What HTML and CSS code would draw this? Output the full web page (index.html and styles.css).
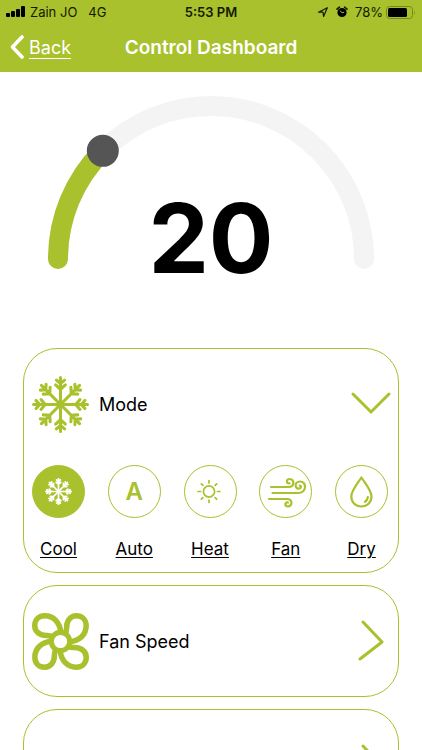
FILE: index.html
```html
<!DOCTYPE html>
<html lang="en">
<head>
    <meta charset="UTF-8">
    <meta name="viewport" content="width=device-width, initial-scale=1.0">
    <title>Control Dashboard</title>
    <link rel="stylesheet" href="styles.css">
    <script>
        // the dial covers 180 degrees between the slider's min and max
        function updateDial() {
            let slider = document.getElementById('temperature');
            let part = (slider.value - slider.min) / (slider.max - slider.min);
            document.getElementById('dialValue').setAttribute('stroke-dasharray', `${part * 100} 200`);
            document.getElementById('dialKnob').setAttribute('transform', `rotate(${part * 180} 163 164)`);
            document.getElementById('reading').innerText = slider.value;
        }

        function toggleModes() {
            document.getElementById('modes').classList.toggle('closed');
        }

        window.onload = updateDial;
    </script>
</head>
<body>
    <header class="header">
        <div class="status">
            <div class="status-side">
                <svg class="signal" viewBox="0 0 19 12" aria-hidden="true">
                    <rect x="0" y="7" width="4" height="4" rx="1"/>
                    <rect x="5" y="5" width="4" height="6" rx="1"/>
                    <rect x="10" y="3" width="4" height="8" rx="1"/>
                    <rect x="15" y="0" width="4" height="11" rx="1"/>
                </svg>
                <span>Zain JO</span>
                <span class="network">4G</span>
            </div>
            <div class="time">5:53 PM</div>
            <div class="status-side status-right">
                <svg class="small-icon" viewBox="0 0 12 12" aria-hidden="true">
                    <path d="M1.5 6.2 L10.3 1.7 L6.6 10.5 L6 6.2 Z" fill="none" stroke="#141a00" stroke-width="1.2" stroke-linejoin="round"/>
                </svg>
                <svg class="small-icon" viewBox="0 0 12 12" aria-hidden="true">
                    <circle cx="6" cy="6.5" r="4.6"/>
                    <path d="M1 3.2 L3.4 1.2 M11 3.2 L8.6 1.2" stroke="#141a00" stroke-width="1.6" stroke-linecap="round"/>
                    <path d="M4 4.6 L6 6.8 L8.2 6.2" fill="none" stroke="#a8c12c" stroke-width="1"/>
                </svg>
                <span>78%</span>
                <svg class="battery" viewBox="0 0 30 13" aria-hidden="true">
                    <rect x="0.5" y="0.5" width="26" height="12" rx="3" fill="none" stroke="#768a1c"/>
                    <rect x="2" y="2" width="19" height="9" rx="1.5"/>
                    <path d="M28 4.5 Q29.5 6.5 28 8.5 Z" fill="#768a1c"/>
                </svg>
            </div>
        </div>
        <nav class="nav">
            <a class="back" href="#">
                <svg class="back-icon" viewBox="0 0 14 24" aria-hidden="true">
                    <path d="M12 2 L2.5 12 L12 22" fill="none" stroke="#fff" stroke-width="3.6" stroke-linecap="round" stroke-linejoin="round"/>
                </svg>
                <span class="back-text">Back</span>
            </a>
            <h1 class="title">Control Dashboard</h1>
        </nav>
    </header>

    <main class="content">
        <div class="dial">
            <svg class="dial-arc" viewBox="0 0 326 174" aria-hidden="true">
                <path d="M10 164 A153 153 0 0 1 316 164" fill="none" stroke="#f4f4f4" stroke-width="20" stroke-linecap="round"/>
                <path id="dialValue" d="M10 164 A153 153 0 0 1 316 164" pathLength="100" stroke-dasharray="25 200" fill="none" stroke="#a8c12c" stroke-width="20" stroke-linecap="round"/>
                <circle id="dialKnob" cx="10" cy="164" r="16" fill="#555"/>
            </svg>
            <output id="reading" class="reading" for="temperature">20</output>
            <input type="range" id="temperature" class="dial-input" min="16" max="32" value="20" aria-label="Temperature" oninput="updateDial()">
        </div>

        <section class="card">
            <button class="card-head" onclick="toggleModes()">
                <svg class="card-icon" viewBox="0 0 56 56" aria-hidden="true">
                    <defs>
                        <path id="arm" d="M28 28 V1.5 M28 7.5 L24 4 M28 7.5 L32 4 M28 13 L23.2 8.8 M28 13 L32.8 8.8"/>
                        <g id="flake" fill="none" stroke="currentColor" stroke-linecap="round">
                            <use href="#arm"/>
                            <use href="#arm" transform="rotate(45 28 28)"/>
                            <use href="#arm" transform="rotate(90 28 28)"/>
                            <use href="#arm" transform="rotate(135 28 28)"/>
                            <use href="#arm" transform="rotate(180 28 28)"/>
                            <use href="#arm" transform="rotate(225 28 28)"/>
                            <use href="#arm" transform="rotate(270 28 28)"/>
                            <use href="#arm" transform="rotate(315 28 28)"/>
                        </g>
                    </defs>
                    <use href="#flake" stroke-width="3"/>
                </svg>
                <span class="card-label">Mode</span>
                <svg class="chevron" viewBox="0 0 40 42" aria-hidden="true">
                    <path d="M2 11 L20 29 L38 11" fill="none" stroke="currentColor" stroke-width="3" stroke-linecap="round"/>
                </svg>
            </button>
            <div id="modes" class="modes">
                <a class="mode" href="#">
                    <span class="mode-icon active">
                        <svg class="mode-flake" viewBox="0 0 56 56" aria-hidden="true"><use href="#flake" stroke-width="3.6"/></svg>
                    </span>
                    <span class="mode-name">Cool</span>
                </a>
                <a class="mode" href="#">
                    <span class="mode-icon mode-letter" aria-hidden="true">A</span>
                    <span class="mode-name">Auto</span>
                </a>
                <a class="mode" href="#">
                    <span class="mode-icon">
                        <svg class="mode-drawing" viewBox="0 0 53 53" aria-hidden="true">
                            <g fill="none" stroke="currentColor" stroke-width="1.7" stroke-linecap="round">
                                <circle cx="25" cy="26.5" r="5.6"/>
                                <path d="M25 15.6 V18 M25 35 V37.4 M14.1 26.5 H16.5 M33.5 26.5 H35.9 M17.3 18.8 L18.9 20.4 M31.1 32.6 L32.7 34.2 M32.7 18.8 L31.1 20.4 M18.9 32.6 L17.3 34.2"/>
                            </g>
                        </svg>
                    </span>
                    <span class="mode-name">Heat</span>
                </a>
                <a class="mode" href="#">
                    <span class="mode-icon">
                        <svg class="mode-drawing" viewBox="0 0 53 53" aria-hidden="true">
                            <g fill="none" stroke="currentColor" stroke-width="2.2" stroke-linecap="round">
                                <path d="M12 22 H29.5 C36 22 35.5 14 30.8 14 C27 14 27 19 30.5 18.4"/>
                                <path d="M13.5 28 H39 C48 28 48 16.5 41 16.5 C35 16.5 35.5 24.5 40.5 23.5 C42.5 23 42.3 20.5 40.7 20.6"/>
                                <path d="M10 34 H28 C34 34 33.5 41.5 29 41.5 C25.5 41.5 25.5 37 29 37.5"/>
                            </g>
                        </svg>
                    </span>
                    <span class="mode-name">Fan</span>
                </a>
                <a class="mode" href="#">
                    <span class="mode-icon">
                        <svg class="mode-drawing" viewBox="0 0 53 53" aria-hidden="true">
                            <g fill="none" stroke="currentColor" stroke-width="2.2" stroke-linecap="round" stroke-linejoin="round">
                                <path d="M26.4 12.5 C23 18 16.3 25.5 16.3 31.5 C16.3 37.5 20.8 41.5 26.4 41.5 C32 41.5 36.5 37.5 36.5 31.5 C36.5 25.5 29.8 18 26.4 12.5 Z"/>
                                <path d="M32.8 32 Q32.6 35.3 30 36.8"/>
                            </g>
                        </svg>
                    </span>
                    <span class="mode-name">Dry</span>
                </a>
            </div>
        </section>

        <section class="card">
            <button class="card-head">
                <svg class="card-icon" viewBox="0 0 56 56" aria-hidden="true">
                    <defs>
                        <path id="petal" d="M28.5 20 C27.5 9 21 2.8 12.5 2.8 C6 2.8 2.7 7.5 2.7 12.5 C2.7 18.5 8 22.3 15 22 C18 22 20 23 21.5 24.2"/>
                    </defs>
                    <g fill="none" stroke="currentColor" stroke-width="5.4" stroke-linecap="round">
                        <use href="#petal"/>
                        <use href="#petal" transform="rotate(90 28 28)"/>
                        <use href="#petal" transform="rotate(180 28 28)"/>
                        <use href="#petal" transform="rotate(270 28 28)"/>
                        <circle cx="28" cy="28" r="9" fill="#fff" stroke-width="5"/>
                    </g>
                </svg>
                <span class="card-label">Fan Speed</span>
                <svg class="chevron" viewBox="0 0 40 42" aria-hidden="true">
                    <path d="M12 2 L31 22 L9 39" fill="none" stroke="currentColor" stroke-width="3" stroke-linecap="round" stroke-linejoin="round"/>
                </svg>
            </button>
        </section>

        <section class="card">
            <button class="card-head" aria-label="More">
                <span class="card-label"></span>
                <svg class="chevron" viewBox="0 0 40 42" aria-hidden="true">
                    <path d="M12 2 L31 22 L9 39" fill="none" stroke="currentColor" stroke-width="3" stroke-linecap="round" stroke-linejoin="round"/>
                </svg>
            </button>
        </section>
    </main>
</body>
</html>
```

FILE: styles.css
```css
body {
    margin: 0;
    height: 100vh;
    display: flex;
    flex-direction: column;
    background-color: #ffffff;
    color: #000000;
    font-family: Inter, "Liberation Sans", sans-serif;
}
.header {
    flex-shrink: 0;
    background-color: #a8c12c;
}
.status {
    display: grid;
    grid-template-columns: 1fr auto 1fr;
    align-items: center;
    height: 24px;
    padding: 0 6px;
    font-size: 13px;
    color: #141a00;
}
.status-side {
    display: flex;
    align-items: center;
    gap: 5px;
}
.status-right {
    justify-content: flex-end;
    gap: 7px;
}
.network {
    margin-left: 6px;
}
.signal {
    width: 19px;
    height: 12px;
}
.small-icon {
    width: 12px;
    height: 12px;
}
.battery {
    width: 30px;
    height: 13px;
    margin-left: -4px;
}
.time {
    font-weight: 600;
}
.nav {
    display: grid;
    grid-template-columns: 1fr auto 1fr;
    align-items: center;
    height: 46px;
    padding: 0 10px 2px;
}
.back {
    display: flex;
    align-items: center;
    gap: 5px;
    color: #ffffff;
    font-size: 18px;
    text-decoration: none;
}
.back-icon {
    width: 14px;
    height: 24px;
}
.back-text {
    text-decoration: underline;
    text-underline-offset: 4px;
}
.title {
    margin: 0;
    color: #ffffff;
    font-size: 19px;
    font-weight: 600;
}
.content {
    flex: 1;
    min-height: 0;
    display: flex;
    flex-direction: column;
    gap: 12px;
    padding: 23px 23px 12px;
    overflow-y: auto;
    scrollbar-width: none;
}
.dial {
    position: relative;
    flex-shrink: 0;
    display: grid;
    justify-items: center;
    align-items: end;
    margin-bottom: 55px;
}
.dial-arc {
    grid-area: 1 / 1;
    width: 326px;
    height: 174px;
    margin-bottom: 12px;
    overflow: visible;
}
.reading {
    grid-area: 1 / 1;
    font-size: 96px;
    line-height: 86px;
    font-weight: 700;
}
/* invisible slider that takes drags and key presses for the dial */
.dial-input {
    position: absolute;
    inset: 0;
    width: 100%;
    height: 100%;
    margin: 0;
    opacity: 0;
    cursor: pointer;
}
.card {
    flex-shrink: 0;
    border: 1px solid #a8c12c;
    border-radius: 34px;
}
.card-head {
    display: flex;
    align-items: center;
    gap: 10px;
    width: 100%;
    height: 110px;
    padding: 0 7px 0 8px;
    border: none;
    background: none;
    color: #a8c12c;
    font-family: inherit;
    font-size: 18px;
    text-align: left;
    cursor: pointer;
}
.card-icon {
    width: 57px;
    height: 57px;
}
.card-label {
    flex: 1;
    color: #000000;
}
.chevron {
    width: 40px;
    height: 42px;
}
.modes {
    display: flex;
    justify-content: space-between;
    padding: 6px 10px 13px 8px;
}
.modes.closed {
    display: none;
}
.mode {
    display: flex;
    flex-direction: column;
    align-items: center;
    gap: 21px;
    width: 53px;
    color: #000000;
    font-size: 17px;
    line-height: 20px;
    text-decoration: none;
}
.mode-name {
    text-decoration: underline;
    text-underline-offset: 2px;
}
.mode-icon {
    box-sizing: border-box;
    display: flex;
    align-items: center;
    justify-content: center;
    width: 53px;
    height: 53px;
    border: 1px solid #a8c12c;
    border-radius: 50%;
    color: #a8c12c;
}
.mode-icon.active {
    background-color: #a8c12c;
    color: #ffffff;
}
.mode-letter {
    font-size: 24px;
    font-weight: 600;
}
.mode-flake {
    width: 27px;
    height: 27px;
}
.mode-drawing {
    flex-shrink: 0;
    width: 53px;
    height: 53px;
}
```
